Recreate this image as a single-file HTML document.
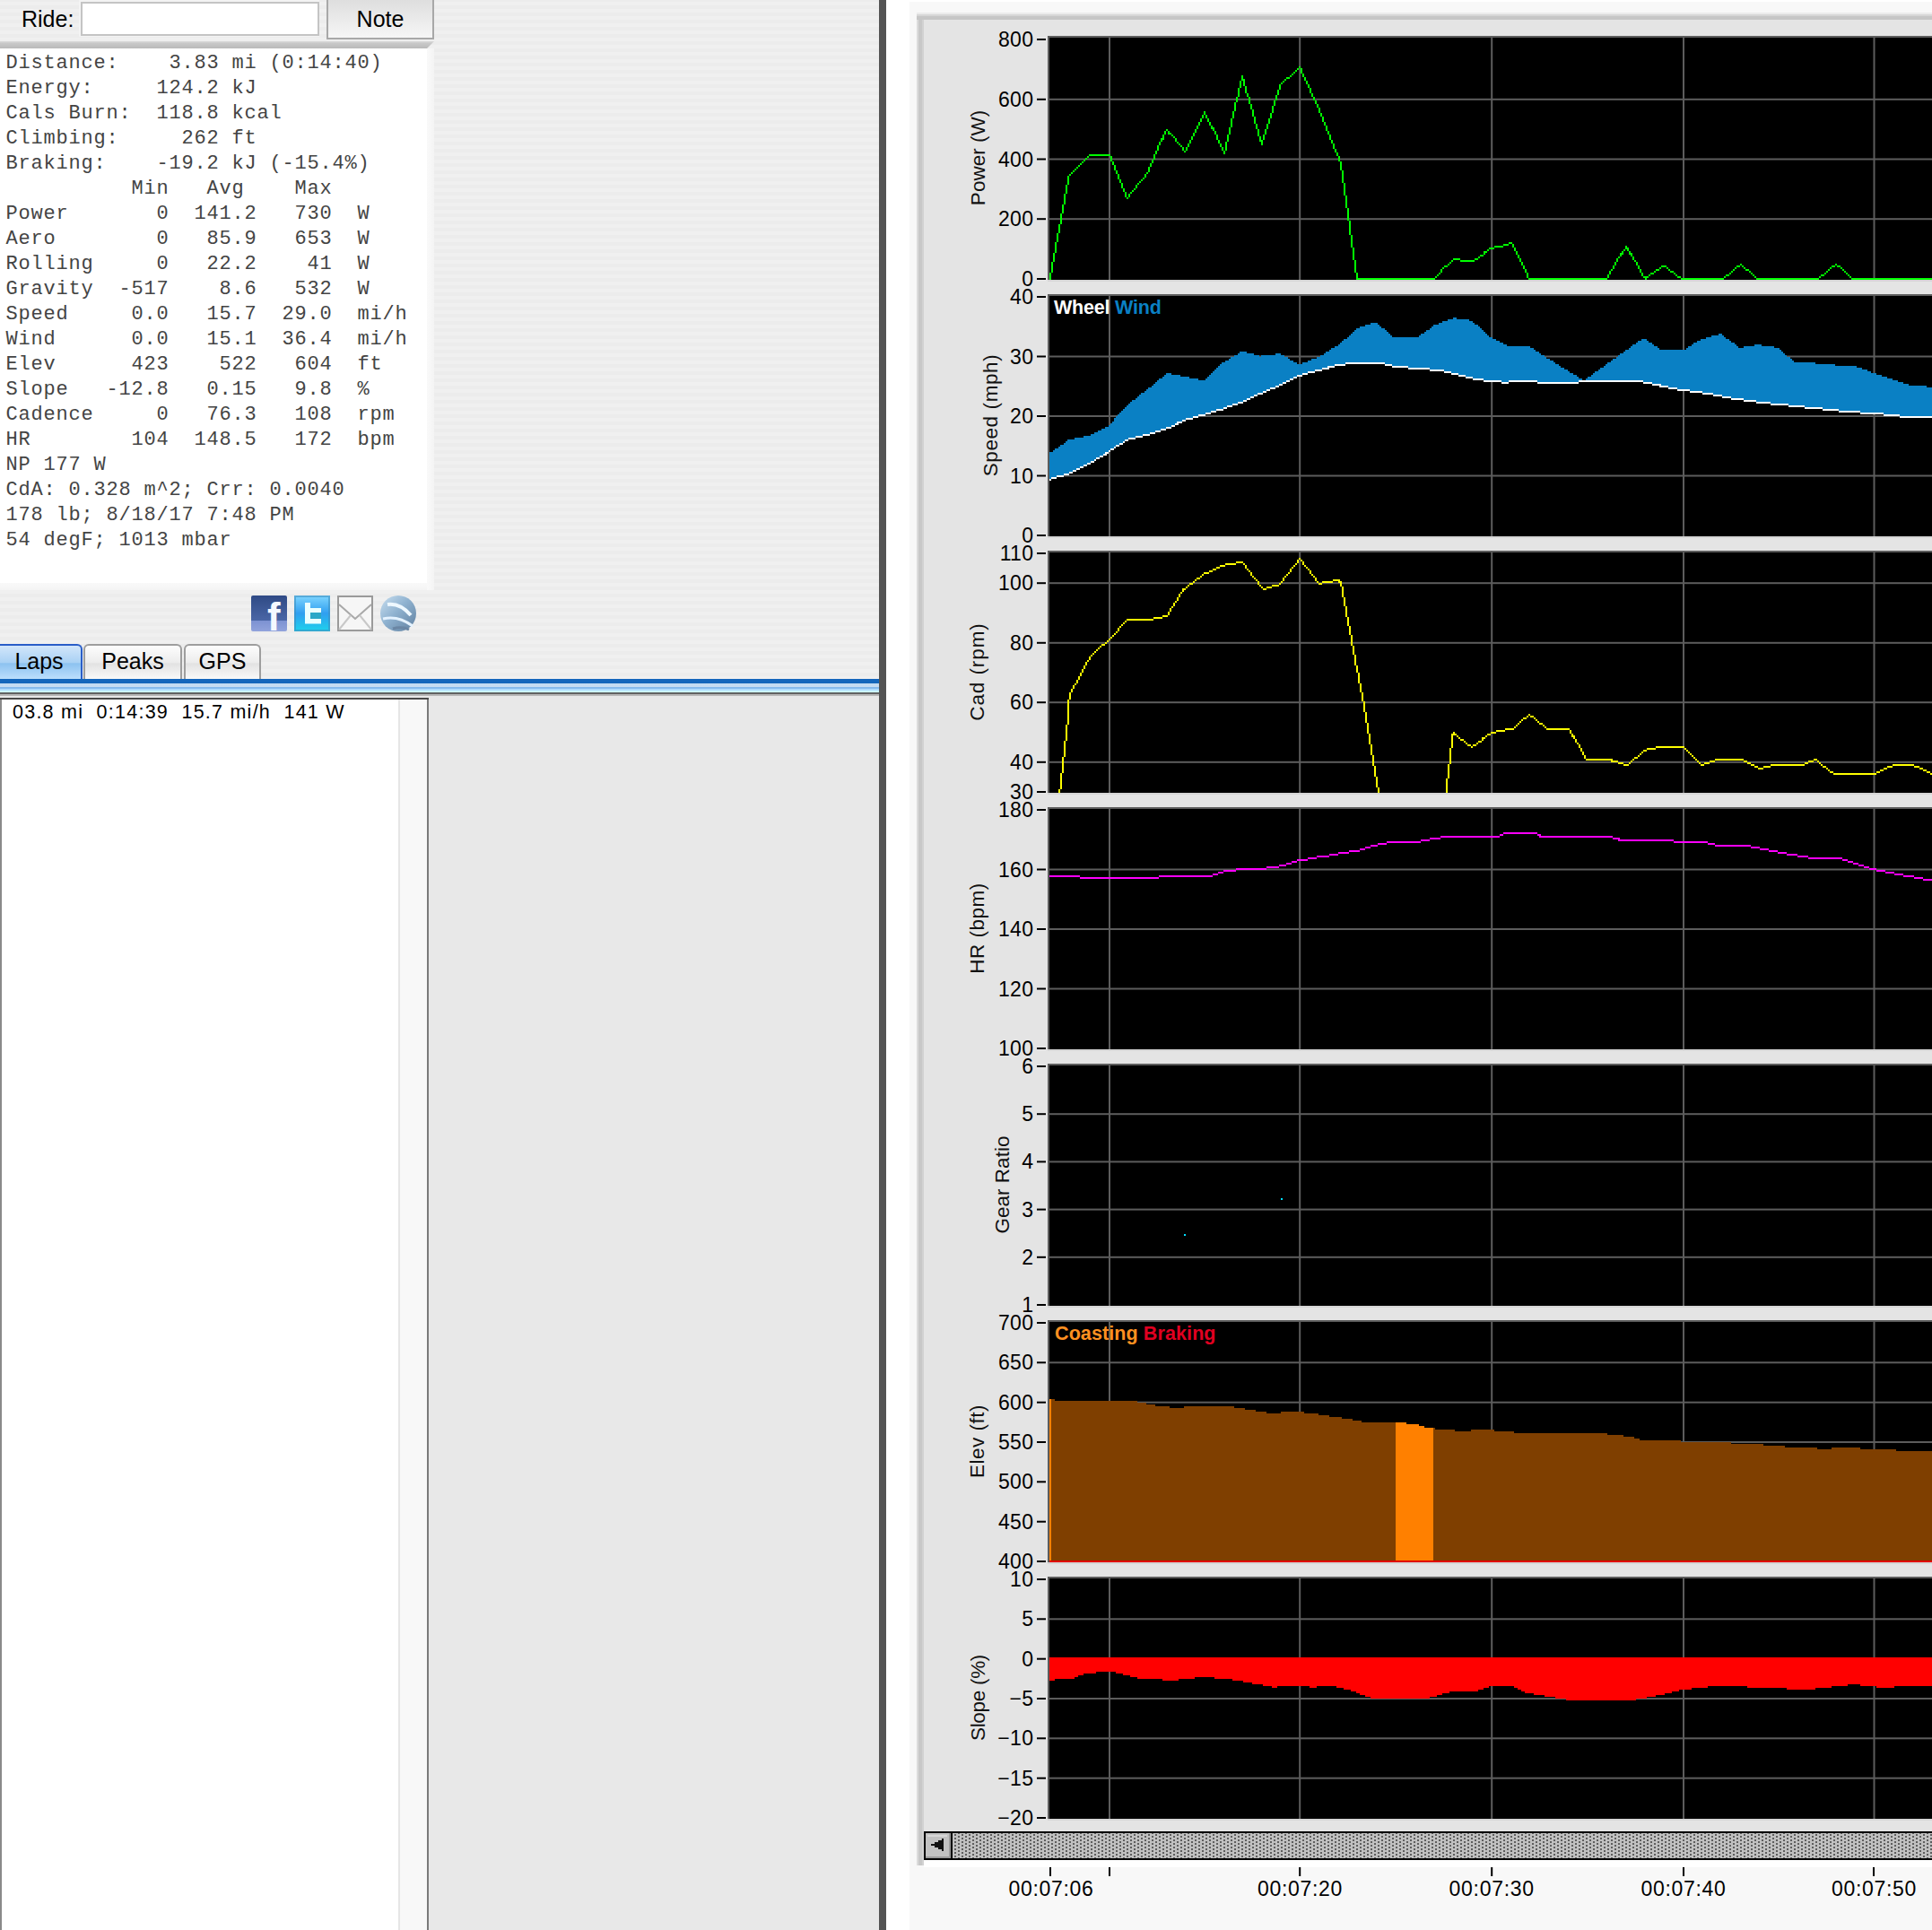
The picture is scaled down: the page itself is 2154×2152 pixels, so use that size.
<!DOCTYPE html>
<html><head><meta charset="utf-8">
<style>
html,body{margin:0;padding:0;width:2154px;height:2152px;overflow:hidden;background:#fff;}
body{position:relative;font-family:"Liberation Sans",sans-serif;}
.abs{position:absolute;}
.stripes{background:repeating-linear-gradient(to bottom,#ececec 0px,#ececec 2px,#f0f0f0 2px,#f0f0f0 6px,#ececec 6px,#ececec 8px);}
.mono{position:absolute;left:6.5px;top:57px;font-family:"Liberation Mono",monospace;font-size:22px;letter-spacing:0.8px;line-height:28px;white-space:pre;color:#444;}
.yt{position:absolute;left:952px;width:200.5px;text-align:right;font-size:23px;line-height:28px;color:#000;letter-spacing:0.4px;}
.yl{position:absolute;width:300px;text-align:center;font-size:22.5px;line-height:28px;color:#111;transform:rotate(-90deg);}
.xt{position:absolute;top:2092px;width:200px;text-align:center;font-size:23px;line-height:28px;color:#000;letter-spacing:0.7px;}
</style></head><body>
<!-- left panel background -->
<div class="abs stripes" style="left:0;top:0;width:980px;height:2152px"></div>
<!-- header -->
<div class="abs" style="left:88px;top:0;width:268px;height:41px;background:#f3f3f3"></div>
<div class="abs" style="left:90px;top:2px;width:262px;height:34px;background:#fff;border:2px solid #c4c4c4"></div>
<div class="abs" style="left:24px;top:4px;font-size:25px;line-height:34px;color:#000">Ride:</div>
<div class="abs" style="left:364px;top:-2px;width:116px;height:42px;border:2px solid #a8a8a8;background:linear-gradient(#dedede,#f6f6f6);"></div>
<div class="abs" style="left:364px;top:4px;width:120px;text-align:center;font-size:25px;line-height:34px;color:#000">Note</div>
<div class="abs" style="left:0;top:44px;width:484px;height:2px;background:#eeeeee"></div>
<div class="abs" style="left:0;top:46px;width:484px;height:8px;background:linear-gradient(#dadada,#c8c8c8 30%,#b9b9b9);clip-path:polygon(0 0,100% 0,100% 0,476px 100%,0 100%)"></div>
<!-- text box -->
<div class="abs" style="left:0;top:54px;width:476px;height:596px;background:#fff"></div>
<div class="abs" style="left:476px;top:54px;width:8px;height:604px;background:linear-gradient(to right,#f9f9f9,#f4f4f4)"></div>
<div class="abs" style="left:0;top:650px;width:476px;height:8px;background:linear-gradient(#f9f9f9,#f4f4f4)"></div>
<div class="mono">Distance:    3.83 mi (0:14:40)
Energy:     124.2 kJ
Cals Burn:  118.8 kcal
Climbing:     262 ft
Braking:    -19.2 kJ (-15.4%)
          Min   Avg    Max
Power       0  141.2   730  W
Aero        0   85.9   653  W
Rolling     0   22.2    41  W
Gravity  -517    8.6   532  W
Speed     0.0   15.7  29.0  mi/h
Wind      0.0   15.1  36.4  mi/h
Elev      423    522   604  ft
Slope   -12.8   0.15   9.8  %
Cadence     0   76.3   108  rpm
HR        104  148.5   172  bpm
NP 177 W
CdA: 0.328 m^2; Crr: 0.0040
178 lb; 8/18/17 7:48 PM
54 degF; 1013 mbar</div>
<!-- icons -->
<div class="abs" style="left:280px;top:664px;width:40px;height:40px;background:linear-gradient(#2f4a85 0%,#4a66a6 70%,#7d92d2 71%,#91a3dc 100%);border-radius:2px"></div>
<div class="abs" style="left:298px;top:664px;width:40px;height:44px;color:#f4f8ff;font-weight:bold;font-size:44px;line-height:48px;font-family:'Liberation Sans',sans-serif">f</div>
<svg class="abs" style="left:328px;top:664px" width="40" height="40"><defs><linearGradient id="tw" x1="0" y1="0" x2="0" y2="1"><stop offset="0" stop-color="#7fd6ff"/><stop offset="0.5" stop-color="#2f9ff0"/><stop offset="1" stop-color="#1ed2ec"/></linearGradient></defs><rect x="0" y="0" width="40" height="40" fill="url(#tw)"/><rect x="1" y="1" width="38" height="38" fill="none" stroke="#3d8fc0" stroke-width="2" opacity="0.6"/><rect x="18" y="19" width="12" height="7" fill="#2aa8c8"/><path d="M12,8 L18,8 L18,14 L30,14 L30,19 L18,19 L18,26 L30,26 L30,31.5 L12,31.5 Z" fill="#eaffff"/></svg>
<svg class="abs" style="left:376px;top:664px" width="40" height="40"><rect x="1" y="1" width="38" height="38" fill="#f6f6f6" stroke="#9a9a9a" stroke-width="2"/><path d="M2,10 L20,26 L38,10" fill="none" stroke="#a8a8a8" stroke-width="2"/><path d="M2,38 L15,22 M38,38 L25,22" stroke="#c8c8c8" stroke-width="2"/></svg>
<svg class="abs" style="left:424px;top:664px" width="40" height="40"><defs><linearGradient id="gl" x1="0" y1="0" x2="1" y2="1"><stop offset="0" stop-color="#c9dff0"/><stop offset="0.45" stop-color="#8fb2d0"/><stop offset="1" stop-color="#5f7f9f"/></linearGradient></defs><circle cx="20" cy="20" r="20" fill="url(#gl)"/><path d="M8,10 Q22,8 34,22" stroke="#eef8ff" stroke-width="4" fill="none"/><path d="M3,26 Q20,22 36,34" stroke="#e4f2ff" stroke-width="3" fill="none"/><path d="M14,37 Q24,34 32,38" stroke="#6a86a4" stroke-width="3" fill="none"/></svg>
<!-- tabs -->
<div class="abs" style="left:-4px;top:718px;width:92px;height:38px;border:2px solid #2a5ec8;border-bottom:none;border-radius:0 6px 0 0;background:linear-gradient(#d2e6fa,#a9d1f4 50%,#8cc2f0 52%,#bfe0fd)"></div>
<div class="abs" style="left:93px;top:718px;width:106px;height:38px;border:2px solid #9e9e9e;border-bottom:none;border-radius:6px 6px 0 0;background:linear-gradient(#fdfdfd,#ececec 50%,#e2e2e2 52%,#fafafa)"></div>
<div class="abs" style="left:205px;top:718px;width:82px;height:38px;border:2px solid #9e9e9e;border-bottom:none;border-radius:6px 6px 0 0;background:linear-gradient(#fdfdfd,#ececec 50%,#e2e2e2 52%,#fafafa)"></div>
<div class="abs" style="left:-2px;top:720px;width:91px;text-align:center;font-size:25px;line-height:34px;color:#000">Laps</div>
<div class="abs" style="left:93px;top:720px;width:110px;text-align:center;font-size:25px;line-height:34px;color:#000">Peaks</div>
<div class="abs" style="left:205px;top:720px;width:86px;text-align:center;font-size:25px;line-height:34px;color:#000">GPS</div>
<div class="abs" style="left:0;top:757px;width:980px;height:5px;background:#1466bc"></div>
<div class="abs" style="left:0;top:762px;width:980px;height:10px;background:linear-gradient(#c2daf1 0%,#c8ddf3 40%,#86baec 40%,#86baec 60%,#b0dcff 60%,#b0dcff 80%,#ccfeff 80%)"></div>
<div class="abs" style="left:0;top:772px;width:980px;height:2px;background:#626262"></div>
<div class="abs" style="left:0;top:774px;width:980px;height:2px;background:#b6b6b6"></div>
<div class="abs" style="left:0;top:776px;width:980px;height:1376px;background:#e8e8e8"></div>
<!-- list -->
<div class="abs" style="left:0;top:778px;width:478px;height:1374px;background:#4a4a4a"></div>
<div class="abs" style="left:2px;top:780px;width:474px;height:1372px;background:#fff"></div>
<div class="abs" style="left:476px;top:780px;width:2px;height:1372px;background:#7a7a7a"></div>
<div class="abs" style="left:0;top:780px;width:2px;height:1372px;background:#8a8a8a"></div>
<div class="abs" style="left:444px;top:780px;width:2px;height:1372px;background:#e6e6e6"></div>
<div class="abs" style="left:446px;top:780px;width:30px;height:1372px;background:#f8f8f8"></div>
<div class="abs" style="left:14px;top:780px;font-size:21.5px;line-height:28px;color:#000;white-space:pre;letter-spacing:1.24px">03.8 mi  0:14:39  15.7 mi/h  141 W</div>
<!-- divider -->
<div class="abs" style="left:980px;top:0;width:8px;height:2152px;background:#545454"></div>
<!-- right panel -->
<div class="abs" style="left:1014px;top:2px;width:1140px;height:2150px;background:#f8f8f8"></div>
<div class="abs" style="left:1022px;top:14px;width:1132px;height:2066px;background:linear-gradient(to right,#dcdcdc 0,#dcdcdc 2px,#c8c8c8 2px,#c8c8c8 6px,#d2d2d2 6px)"></div>
<div class="abs" style="left:1022px;top:14px;width:1132px;height:8px;background:linear-gradient(#ebebeb 0,#ebebeb 2px,#d6d6d6 2px,#d6d6d6 4.3px,#c6c6c6 4.3px)"></div>
<div class="abs" style="left:1030px;top:22px;width:1124px;height:2020px;background:#e4e4e4"></div>
<div class="abs" style="left:1030px;top:2074px;width:1124px;height:8px;background:#fff"></div>
<svg width="2154" height="2152" viewBox="0 0 2154 2152" style="position:absolute;left:0;top:0">
<defs>
<clipPath id="c0"><rect x="1170" y="42" width="984" height="270"/></clipPath>
<clipPath id="c1"><rect x="1170" y="330" width="984" height="268"/></clipPath>
<clipPath id="c2"><rect x="1170" y="616" width="984" height="268"/></clipPath>
<clipPath id="c3"><rect x="1170" y="902" width="984" height="268"/></clipPath>
<clipPath id="c4"><rect x="1170" y="1188" width="984" height="268"/></clipPath>
<clipPath id="c5"><rect x="1170" y="1474" width="984" height="268"/></clipPath>
<clipPath id="c6"><rect x="1170" y="1760" width="984" height="268"/></clipPath>
<pattern id="dots" x="1064" y="2045" width="8" height="4" patternUnits="userSpaceOnUse"><rect width="8" height="4" fill="#c0c0c0"/><rect x="0" y="0" width="2" height="2" fill="#5e5e5e"/><rect x="4" y="2" width="2" height="2" fill="#5e5e5e"/></pattern>
</defs>
<rect x="1168" y="40" width="986" height="272" fill="#000"/>
<rect x="1168" y="40" width="986" height="2" fill="#5c5c5c"/>
<rect x="1168" y="40" width="2" height="272" fill="#5c5c5c"/>
<rect x="1168" y="312" width="986" height="2" fill="#d6d6d6"/>
<rect x="1156" y="43.0" width="10" height="2" fill="#000"/>
<rect x="1156" y="109.8" width="10" height="2" fill="#000"/>
<rect x="1170" y="109.8" width="984" height="2" fill="#5c5c5c"/>
<rect x="1156" y="176.5" width="10" height="2" fill="#000"/>
<rect x="1170" y="176.5" width="984" height="2" fill="#5c5c5c"/>
<rect x="1156" y="243.2" width="10" height="2" fill="#000"/>
<rect x="1170" y="243.2" width="984" height="2" fill="#5c5c5c"/>
<rect x="1156" y="310.0" width="10" height="2" fill="#000"/>
<rect x="1236.0" y="40" width="2" height="272" fill="#5c5c5c"/>
<rect x="1448.2" y="40" width="2" height="272" fill="#5c5c5c"/>
<rect x="1662.2" y="40" width="2" height="272" fill="#5c5c5c"/>
<rect x="1876.0" y="40" width="2" height="272" fill="#5c5c5c"/>
<rect x="2088.5" y="40" width="2" height="272" fill="#5c5c5c"/>
<rect x="1168" y="328" width="986" height="270" fill="#000"/>
<rect x="1168" y="328" width="986" height="2" fill="#5c5c5c"/>
<rect x="1168" y="328" width="2" height="270" fill="#5c5c5c"/>
<rect x="1168" y="598" width="986" height="2" fill="#d6d6d6"/>
<rect x="1156" y="330.0" width="10" height="2" fill="#000"/>
<rect x="1156" y="396.5" width="10" height="2" fill="#000"/>
<rect x="1170" y="396.5" width="984" height="2" fill="#5c5c5c"/>
<rect x="1156" y="463.0" width="10" height="2" fill="#000"/>
<rect x="1170" y="463.0" width="984" height="2" fill="#5c5c5c"/>
<rect x="1156" y="529.5" width="10" height="2" fill="#000"/>
<rect x="1170" y="529.5" width="984" height="2" fill="#5c5c5c"/>
<rect x="1156" y="596.0" width="10" height="2" fill="#000"/>
<rect x="1236.0" y="328" width="2" height="270" fill="#5c5c5c"/>
<rect x="1448.2" y="328" width="2" height="270" fill="#5c5c5c"/>
<rect x="1662.2" y="328" width="2" height="270" fill="#5c5c5c"/>
<rect x="1876.0" y="328" width="2" height="270" fill="#5c5c5c"/>
<rect x="2088.5" y="328" width="2" height="270" fill="#5c5c5c"/>
<rect x="1168" y="614" width="986" height="270" fill="#000"/>
<rect x="1168" y="614" width="986" height="2" fill="#5c5c5c"/>
<rect x="1168" y="614" width="2" height="270" fill="#5c5c5c"/>
<rect x="1168" y="884" width="986" height="2" fill="#d6d6d6"/>
<rect x="1156" y="616.0" width="10" height="2" fill="#000"/>
<rect x="1156" y="649.2" width="10" height="2" fill="#000"/>
<rect x="1170" y="649.2" width="984" height="2" fill="#5c5c5c"/>
<rect x="1156" y="715.8" width="10" height="2" fill="#000"/>
<rect x="1170" y="715.8" width="984" height="2" fill="#5c5c5c"/>
<rect x="1156" y="782.2" width="10" height="2" fill="#000"/>
<rect x="1170" y="782.2" width="984" height="2" fill="#5c5c5c"/>
<rect x="1156" y="848.8" width="10" height="2" fill="#000"/>
<rect x="1170" y="848.8" width="984" height="2" fill="#5c5c5c"/>
<rect x="1156" y="882.0" width="10" height="2" fill="#000"/>
<rect x="1236.0" y="614" width="2" height="270" fill="#5c5c5c"/>
<rect x="1448.2" y="614" width="2" height="270" fill="#5c5c5c"/>
<rect x="1662.2" y="614" width="2" height="270" fill="#5c5c5c"/>
<rect x="1876.0" y="614" width="2" height="270" fill="#5c5c5c"/>
<rect x="2088.5" y="614" width="2" height="270" fill="#5c5c5c"/>
<rect x="1168" y="900" width="986" height="270" fill="#000"/>
<rect x="1168" y="900" width="986" height="2" fill="#5c5c5c"/>
<rect x="1168" y="900" width="2" height="270" fill="#5c5c5c"/>
<rect x="1168" y="1170" width="986" height="2" fill="#d6d6d6"/>
<rect x="1156" y="902.0" width="10" height="2" fill="#000"/>
<rect x="1156" y="968.5" width="10" height="2" fill="#000"/>
<rect x="1170" y="968.5" width="984" height="2" fill="#5c5c5c"/>
<rect x="1156" y="1035.0" width="10" height="2" fill="#000"/>
<rect x="1170" y="1035.0" width="984" height="2" fill="#5c5c5c"/>
<rect x="1156" y="1101.5" width="10" height="2" fill="#000"/>
<rect x="1170" y="1101.5" width="984" height="2" fill="#5c5c5c"/>
<rect x="1156" y="1168.0" width="10" height="2" fill="#000"/>
<rect x="1236.0" y="900" width="2" height="270" fill="#5c5c5c"/>
<rect x="1448.2" y="900" width="2" height="270" fill="#5c5c5c"/>
<rect x="1662.2" y="900" width="2" height="270" fill="#5c5c5c"/>
<rect x="1876.0" y="900" width="2" height="270" fill="#5c5c5c"/>
<rect x="2088.5" y="900" width="2" height="270" fill="#5c5c5c"/>
<rect x="1168" y="1186" width="986" height="270" fill="#000"/>
<rect x="1168" y="1186" width="986" height="2" fill="#5c5c5c"/>
<rect x="1168" y="1186" width="2" height="270" fill="#5c5c5c"/>
<rect x="1168" y="1456" width="986" height="2" fill="#d6d6d6"/>
<rect x="1156" y="1188.0" width="10" height="2" fill="#000"/>
<rect x="1156" y="1241.2" width="10" height="2" fill="#000"/>
<rect x="1170" y="1241.2" width="984" height="2" fill="#5c5c5c"/>
<rect x="1156" y="1294.4" width="10" height="2" fill="#000"/>
<rect x="1170" y="1294.4" width="984" height="2" fill="#5c5c5c"/>
<rect x="1156" y="1347.6" width="10" height="2" fill="#000"/>
<rect x="1170" y="1347.6" width="984" height="2" fill="#5c5c5c"/>
<rect x="1156" y="1400.8" width="10" height="2" fill="#000"/>
<rect x="1170" y="1400.8" width="984" height="2" fill="#5c5c5c"/>
<rect x="1156" y="1454.0" width="10" height="2" fill="#000"/>
<rect x="1236.0" y="1186" width="2" height="270" fill="#5c5c5c"/>
<rect x="1448.2" y="1186" width="2" height="270" fill="#5c5c5c"/>
<rect x="1662.2" y="1186" width="2" height="270" fill="#5c5c5c"/>
<rect x="1876.0" y="1186" width="2" height="270" fill="#5c5c5c"/>
<rect x="2088.5" y="1186" width="2" height="270" fill="#5c5c5c"/>
<rect x="1168" y="1472" width="986" height="270" fill="#000"/>
<rect x="1168" y="1472" width="986" height="2" fill="#5c5c5c"/>
<rect x="1168" y="1472" width="2" height="270" fill="#5c5c5c"/>
<rect x="1168" y="1742" width="986" height="2" fill="#d6d6d6"/>
<rect x="1156" y="1474.0" width="10" height="2" fill="#000"/>
<rect x="1156" y="1518.3" width="10" height="2" fill="#000"/>
<rect x="1170" y="1518.3" width="984" height="2" fill="#5c5c5c"/>
<rect x="1156" y="1562.7" width="10" height="2" fill="#000"/>
<rect x="1170" y="1562.7" width="984" height="2" fill="#5c5c5c"/>
<rect x="1156" y="1607.0" width="10" height="2" fill="#000"/>
<rect x="1170" y="1607.0" width="984" height="2" fill="#5c5c5c"/>
<rect x="1156" y="1651.3" width="10" height="2" fill="#000"/>
<rect x="1170" y="1651.3" width="984" height="2" fill="#5c5c5c"/>
<rect x="1156" y="1695.7" width="10" height="2" fill="#000"/>
<rect x="1170" y="1695.7" width="984" height="2" fill="#5c5c5c"/>
<rect x="1156" y="1740.0" width="10" height="2" fill="#000"/>
<rect x="1236.0" y="1472" width="2" height="270" fill="#5c5c5c"/>
<rect x="1448.2" y="1472" width="2" height="270" fill="#5c5c5c"/>
<rect x="1662.2" y="1472" width="2" height="270" fill="#5c5c5c"/>
<rect x="1876.0" y="1472" width="2" height="270" fill="#5c5c5c"/>
<rect x="2088.5" y="1472" width="2" height="270" fill="#5c5c5c"/>
<rect x="1168" y="1758" width="986" height="270" fill="#000"/>
<rect x="1168" y="1758" width="986" height="2" fill="#5c5c5c"/>
<rect x="1168" y="1758" width="2" height="270" fill="#5c5c5c"/>
<rect x="1168" y="2028" width="986" height="2" fill="#d6d6d6"/>
<rect x="1156" y="1760.0" width="10" height="2" fill="#000"/>
<rect x="1156" y="1804.3" width="10" height="2" fill="#000"/>
<rect x="1170" y="1804.3" width="984" height="2" fill="#5c5c5c"/>
<rect x="1156" y="1848.7" width="10" height="2" fill="#000"/>
<rect x="1170" y="1848.7" width="984" height="2" fill="#5c5c5c"/>
<rect x="1156" y="1893.0" width="10" height="2" fill="#000"/>
<rect x="1170" y="1893.0" width="984" height="2" fill="#5c5c5c"/>
<rect x="1156" y="1937.3" width="10" height="2" fill="#000"/>
<rect x="1170" y="1937.3" width="984" height="2" fill="#5c5c5c"/>
<rect x="1156" y="1981.7" width="10" height="2" fill="#000"/>
<rect x="1170" y="1981.7" width="984" height="2" fill="#5c5c5c"/>
<rect x="1156" y="2026.0" width="10" height="2" fill="#000"/>
<rect x="1236.0" y="1758" width="2" height="270" fill="#5c5c5c"/>
<rect x="1448.2" y="1758" width="2" height="270" fill="#5c5c5c"/>
<rect x="1662.2" y="1758" width="2" height="270" fill="#5c5c5c"/>
<rect x="1876.0" y="1758" width="2" height="270" fill="#5c5c5c"/>
<rect x="2088.5" y="1758" width="2" height="270" fill="#5c5c5c"/>
<path d="M1170,304h2v8h-2zM1172,292h2v12h-2zM1174,282h2v10h-2zM1176,270h2v12h-2zM1178,260h2v10h-2zM1180,250h2v10h-2zM1182,238h2v12h-2zM1184,228h2v10h-2zM1186,216h2v12h-2zM1188,206h2v10h-2zM1190,196h2v10h-2zM1192,194h2v2h-2zM1194,192h2v2h-2zM1196,190h2v2h-2zM1198,188h2v2h-2zM1200,186h2v2h-2zM1202,184h2v2h-2zM1204,182h2v2h-2zM1206,180h2v2h-2zM1208,178h2v2h-2zM1210,176h2v2h-2zM1212,174h2v2h-2zM1214,172h24v2h-24zM1238,174h2v6h-2zM1240,180h2v4h-2zM1242,184h2v6h-2zM1244,190h2v4h-2zM1246,194h2v6h-2zM1248,200h2v4h-2zM1250,204h2v6h-2zM1252,210h2v4h-2zM1254,214h2v6h-2zM1256,220h2v2h-2zM1258,216h2v4h-2zM1260,214h2v2h-2zM1262,212h2v2h-2zM1264,210h2v2h-2zM1266,206h2v4h-2zM1268,204h2v2h-2zM1270,202h2v2h-2zM1272,200h2v2h-2zM1274,198h2v2h-2zM1276,194h2v4h-2zM1278,192h2v2h-2zM1280,186h2v6h-2zM1282,182h2v4h-2zM1284,178h2v4h-2zM1286,172h2v6h-2zM1288,168h2v4h-2zM1290,162h2v6h-2zM1292,158h2v4h-2zM1294,156h2v2h-2zM1294,154h4v2h-4zM1296,150h2v4h-2zM1298,146h2v4h-2zM1300,144h2v2h-2zM1302,146h2v2h-2zM1302,148h4v2h-4zM1306,150h2v2h-2zM1308,152h2v2h-2zM1310,154h2v4h-2zM1312,158h2v2h-2zM1314,160h2v2h-2zM1316,162h2v2h-2zM1318,164h2v4h-2zM1320,168h2v2h-2zM1322,164h2v4h-2zM1324,160h2v4h-2zM1326,156h2v4h-2zM1328,152h2v4h-2zM1330,148h2v4h-2zM1332,144h2v4h-2zM1334,140h2v4h-2zM1336,136h2v4h-2zM1338,132h2v4h-2zM1340,128h2v4h-2zM1342,124h2v4h-2zM1344,128h2v4h-2zM1346,132h2v4h-2zM1348,136h2v4h-2zM1350,140h2v2h-2zM1350,142h4v2h-4zM1352,144h2v2h-2zM1354,146h2v4h-2zM1356,150h2v6h-2zM1358,156h2v4h-2zM1360,160h2v4h-2zM1362,164h2v4h-2zM1364,168h2v4h-2zM1366,158h2v10h-2zM1368,150h2v8h-2zM1370,142h2v8h-2zM1372,132h2v10h-2zM1374,124h2v8h-2zM1376,114h2v10h-2zM1378,108h2v6h-2zM1380,98h2v10h-2zM1382,90h2v8h-2zM1384,84h2v4h-2zM1384,88h4v2h-4zM1386,90h2v6h-2zM1388,96h2v8h-2zM1390,104h2v4h-2zM1392,108h2v8h-2zM1394,116h2v6h-2zM1396,122h2v8h-2zM1398,130h2v8h-2zM1400,138h2v6h-2zM1402,144h2v8h-2zM1404,152h2v4h-2zM1404,156h4v2h-4zM1406,158h2v4h-2zM1408,150h2v6h-2zM1410,144h2v6h-2zM1412,138h2v6h-2zM1414,132h2v6h-2zM1416,126h2v6h-2zM1418,118h2v8h-2zM1420,112h2v6h-2zM1422,106h2v6h-2zM1424,100h2v6h-2zM1426,94h2v6h-2zM1428,92h2v2h-2zM1430,90h2v2h-2zM1432,88h2v2h-2zM1434,86h4v2h-4zM1438,84h2v2h-2zM1440,82h2v2h-2zM1442,80h2v2h-2zM1444,78h2v2h-2zM1446,76h2v2h-2zM1448,74h2v2h-2zM1450,76h2v6h-2zM1452,82h2v4h-2zM1454,86h2v4h-2zM1456,90h2v4h-2zM1458,94h2v4h-2zM1460,98h2v6h-2zM1462,104h2v4h-2zM1464,108h2v4h-2zM1466,112h2v4h-2zM1468,116h2v4h-2zM1470,120h2v6h-2zM1472,126h2v4h-2zM1474,130h2v6h-2zM1476,136h2v4h-2zM1478,140h2v6h-2zM1480,146h2v4h-2zM1482,150h2v6h-2zM1484,156h2v4h-2zM1486,160h2v6h-2zM1488,166h2v4h-2zM1490,170h2v4h-2zM1492,174h2v6h-2zM1494,180h2v10h-2zM1496,190h2v14h-2zM1498,204h2v14h-2zM1500,218h2v14h-2zM1502,232h2v14h-2zM1504,246h2v16h-2zM1506,262h2v14h-2zM1508,276h2v14h-2zM1510,290h2v14h-2zM1512,304h2v6h-2zM1512,310h88v2h-88zM1600,308h2v2h-2zM1602,306h2v2h-2zM1604,304h2v2h-2zM1606,300h2v4h-2zM1608,298h2v2h-2zM1610,296h4v2h-4zM1614,294h2v2h-2zM1616,292h2v2h-2zM1618,290h2v2h-2zM1620,288h8v2h-8zM1628,290h16v2h-16zM1644,288h4v2h-4zM1648,286h2v2h-2zM1650,284h4v2h-4zM1654,282h2v2h-2zM1654,280h4v2h-4zM1658,278h2v2h-2zM1660,276h6v2h-6zM1666,274h10v2h-10zM1676,272h6v2h-6zM1682,270h4v2h-4zM1686,272h2v4h-2zM1688,276h2v4h-2zM1690,280h2v4h-2zM1692,284h2v4h-2zM1694,288h2v4h-2zM1696,292h2v4h-2zM1698,296h2v4h-2zM1700,300h2v4h-2zM1702,304h2v6h-2zM1704,310h88v2h-88zM1792,306h2v4h-2zM1794,302h2v4h-2zM1796,300h2v2h-2zM1798,296h2v4h-2zM1800,292h2v4h-2zM1802,288h2v4h-2zM1804,286h2v2h-2zM1806,284h2v2h-2zM1806,282h4v2h-4zM1808,280h2v2h-2zM1810,278h2v2h-2zM1812,274h2v2h-2zM1812,276h4v2h-4zM1814,278h2v2h-2zM1816,280h2v2h-2zM1816,282h4v2h-4zM1818,284h2v2h-2zM1820,286h2v4h-2zM1822,290h2v2h-2zM1824,292h2v4h-2zM1826,296h2v4h-2zM1828,300h2v4h-2zM1830,304h2v4h-2zM1832,308h6v2h-6zM1834,310h2v2h-2zM1838,306h2v2h-2zM1840,304h4v2h-4zM1844,302h2v2h-2zM1846,300h4v2h-4zM1850,298h2v2h-2zM1852,296h6v2h-6zM1858,298h2v2h-2zM1860,300h2v2h-2zM1862,302h4v2h-4zM1866,304h2v2h-2zM1868,306h2v2h-2zM1870,308h4v2h-4zM1874,310h48v2h-48zM1922,308h2v2h-2zM1924,306h4v2h-4zM1928,304h2v2h-2zM1930,302h2v2h-2zM1932,300h2v2h-2zM1934,298h2v2h-2zM1936,296h4v2h-4zM1940,294h2v2h-2zM1942,296h2v2h-2zM1944,298h2v2h-2zM1946,300h4v2h-4zM1950,302h2v2h-2zM1952,304h2v2h-2zM1954,306h2v2h-2zM1956,308h2v2h-2zM1958,310h70v2h-70zM2028,308h2v2h-2zM2030,306h4v2h-4zM2034,304h2v2h-2zM2036,302h2v2h-2zM2038,300h2v2h-2zM2040,298h2v2h-2zM2042,296h4v2h-4zM2046,294h2v2h-2zM2048,296h4v2h-4zM2052,298h2v2h-2zM2054,300h2v2h-2zM2056,302h2v2h-2zM2058,304h2v2h-2zM2060,306h2v2h-2zM2062,308h2v2h-2zM2064,310h90v2h-90z" fill="#00ff00"/>
<path d="M1170,504h4v30h-4zM1174,502h2v32h-2zM1176,500h4v32h-4zM1180,498h2v34h-2zM1182,496h4v34h-4zM1186,494h2v36h-2zM1188,492h2v36h-2zM1190,490h4v38h-4zM1194,490h4v36h-4zM1198,488h4v36h-4zM1202,488h4v34h-4zM1206,488h2v32h-2zM1208,486h2v34h-2zM1210,486h4v32h-4zM1214,486h2v30h-2zM1216,484h2v32h-2zM1218,484h2v30h-2zM1220,482h2v32h-2zM1222,482h2v30h-2zM1224,480h4v30h-4zM1228,478h2v30h-2zM1230,478h2v28h-2zM1232,476h2v30h-2zM1234,476h2v28h-2zM1236,474h2v30h-2zM1238,472h2v30h-2zM1240,470h2v30h-2zM1242,466h2v34h-2zM1244,464h2v34h-2zM1246,462h2v36h-2zM1248,460h2v36h-2zM1250,458h2v36h-2zM1252,456h2v38h-2zM1254,454h2v38h-2zM1256,452h2v38h-2zM1258,450h2v40h-2zM1260,448h2v42h-2zM1262,446h4v42h-4zM1266,444h2v44h-2zM1268,442h2v46h-2zM1270,440h2v46h-2zM1272,438h4v48h-4zM1276,436h2v50h-2zM1278,434h2v50h-2zM1280,432h4v52h-4zM1284,430h2v52h-2zM1286,428h2v54h-2zM1288,426h2v56h-2zM1290,424h2v56h-2zM1292,422h4v58h-4zM1296,420h2v58h-2zM1298,418h2v60h-2zM1300,416h2v62h-2zM1302,416h4v60h-4zM1306,418h6v56h-6zM1312,418h4v54h-4zM1316,420h4v50h-4zM1320,420h6v48h-6zM1326,422h6v44h-6zM1332,422h4v42h-4zM1336,424h4v40h-4zM1340,424h4v38h-4zM1344,422h2v40h-2zM1346,420h2v40h-2zM1348,418h2v42h-2zM1350,416h2v44h-2zM1352,414h2v46h-2zM1354,412h2v46h-2zM1356,410h2v48h-2zM1358,408h2v50h-2zM1360,406h2v50h-2zM1362,404h4v52h-4zM1366,402h4v52h-4zM1370,400h2v54h-2zM1372,398h4v54h-4zM1376,396h2v56h-2zM1378,396h2v54h-2zM1380,394h2v56h-2zM1382,392h6v56h-6zM1388,392h2v54h-2zM1390,394h2v52h-2zM1392,394h4v50h-4zM1396,394h2v48h-2zM1398,396h2v46h-2zM1400,396h4v44h-4zM1404,398h2v40h-2zM1406,396h4v42h-4zM1410,396h4v40h-4zM1414,396h4v38h-4zM1418,396h4v36h-4zM1422,394h2v38h-2zM1424,394h4v36h-4zM1428,396h4v32h-4zM1432,398h4v28h-4zM1436,400h2v24h-2zM1438,402h2v22h-2zM1440,402h2v20h-2zM1442,404h2v18h-2zM1444,404h2v16h-2zM1446,406h2v14h-2zM1448,406h4v12h-4zM1452,404h2v14h-2zM1454,404h4v12h-4zM1458,402h4v14h-4zM1462,400h6v14h-6zM1468,398h4v14h-4zM1472,396h4v16h-4zM1476,394h2v16h-2zM1478,392h4v18h-4zM1482,390h2v20h-2zM1484,388h4v20h-4zM1488,386h4v22h-4zM1492,384h2v24h-2zM1494,382h2v24h-2zM1496,380h2v26h-2zM1498,378h4v28h-4zM1502,376h2v30h-2zM1504,374h2v32h-2zM1506,372h2v34h-2zM1508,370h2v34h-2zM1510,368h2v36h-2zM1512,366h4v38h-4zM1516,364h6v40h-6zM1522,362h6v42h-6zM1528,360h8v44h-8zM1536,362h2v42h-2zM1538,364h2v42h-2zM1540,366h4v40h-4zM1544,368h2v38h-2zM1546,370h2v38h-2zM1548,372h2v36h-2zM1550,374h2v34h-2zM1552,376h4v32h-4zM1556,376h24v34h-24zM1580,376h2v36h-2zM1582,374h2v38h-2zM1584,372h4v40h-4zM1588,370h2v42h-2zM1590,368h4v44h-4zM1594,366h2v46h-2zM1596,364h2v48h-2zM1598,362h6v50h-6zM1604,360h2v52h-2zM1606,360h2v54h-2zM1608,358h6v56h-6zM1614,356h6v60h-6zM1620,354h2v62h-2zM1622,354h2v64h-2zM1624,356h6v62h-6zM1630,356h8v64h-8zM1638,358h4v64h-4zM1642,360h2v62h-2zM1644,362h4v60h-4zM1648,364h2v60h-2zM1650,366h2v58h-2zM1652,368h2v56h-2zM1654,370h2v54h-2zM1656,372h2v52h-2zM1658,374h2v50h-2zM1660,376h4v48h-4zM1664,378h4v48h-4zM1668,380h4v46h-4zM1672,382h4v44h-4zM1676,384h4v42h-4zM1680,386h12v40h-12zM1692,386h12v38h-12zM1704,386h2v40h-2zM1706,388h4v38h-4zM1710,390h2v36h-2zM1712,392h4v34h-4zM1716,394h2v32h-2zM1718,396h4v30h-4zM1722,398h2v28h-2zM1724,400h4v26h-4zM1728,402h4v24h-4zM1732,404h2v22h-2zM1734,406h4v20h-4zM1738,408h2v18h-2zM1740,410h4v16h-4zM1744,412h4v14h-4zM1748,414h2v12h-2zM1750,416h4v10h-4zM1754,418h4v8h-4zM1758,420h2v6h-2zM1760,422h2v4h-2zM1762,422h2v2h-2zM1768,422h2v2h-2zM1770,420h4v4h-4zM1774,418h2v6h-2zM1776,416h2v8h-2zM1778,414h4v10h-4zM1782,412h2v12h-2zM1784,410h4v14h-4zM1788,408h2v16h-2zM1790,406h2v18h-2zM1792,404h4v20h-4zM1796,402h2v22h-2zM1798,400h4v24h-4zM1802,398h2v26h-2zM1804,396h2v28h-2zM1806,394h4v30h-4zM1810,392h2v32h-2zM1812,390h4v34h-4zM1816,388h2v36h-2zM1818,386h2v38h-2zM1820,384h4v40h-4zM1824,382h2v42h-2zM1826,380h4v46h-4zM1830,378h6v48h-6zM1836,380h2v48h-2zM1838,382h4v46h-4zM1842,384h2v44h-2zM1844,386h2v42h-2zM1846,386h2v44h-2zM1848,388h2v42h-2zM1850,390h6v40h-6zM1856,390h10v42h-10zM1866,390h10v44h-10zM1876,390h4v46h-4zM1880,388h2v48h-2zM1882,386h4v50h-4zM1886,384h2v52h-2zM1888,382h4v54h-4zM1892,380h4v58h-4zM1896,378h6v60h-6zM1902,376h2v62h-2zM1904,376h4v64h-4zM1908,374h6v66h-6zM1914,374h2v68h-2zM1916,372h4v70h-4zM1920,374h2v68h-2zM1922,376h2v66h-2zM1924,378h2v64h-2zM1926,378h2v66h-2zM1928,380h2v64h-2zM1930,382h4v62h-4zM1934,384h2v60h-2zM1936,386h2v60h-2zM1938,388h6v58h-6zM1944,386h6v60h-6zM1950,386h6v62h-6zM1956,384h8v64h-8zM1964,386h2v62h-2zM1966,386h12v64h-12zM1978,388h4v62h-4zM1982,388h2v64h-2zM1984,390h2v62h-2zM1986,392h2v60h-2zM1988,394h2v58h-2zM1990,396h2v56h-2zM1992,398h4v54h-4zM1996,400h2v52h-2zM1998,402h2v50h-2zM2000,404h2v48h-2zM2002,404h20v50h-20zM2022,404h2v52h-2zM2024,406h18v50h-18zM2042,406h4v52h-4zM2046,408h16v50h-16zM2062,408h8v52h-8zM2070,410h6v50h-6zM2076,412h6v48h-6zM2082,414h4v46h-4zM2086,416h6v46h-6zM2092,418h6v44h-6zM2098,420h6v42h-6zM2104,422h4v40h-4zM2108,422h2v42h-2zM2110,424h6v40h-6zM2116,426h6v38h-6zM2122,428h6v36h-6zM2128,430h20v34h-20zM2148,432h6v32h-6z" fill="#0a80c4"/>
<path d="M1170,534h2v2h-2zM1172,532h6v2h-6zM1178,530h8v2h-8zM1186,528h6v2h-6zM1192,526h4v2h-4zM1196,524h4v2h-4zM1200,522h4v2h-4zM1204,520h4v2h-4zM1208,518h4v2h-4zM1212,516h4v2h-4zM1216,514h4v2h-4zM1220,512h2v2h-2zM1222,510h4v2h-4zM1226,508h4v2h-4zM1230,506h4v2h-4zM1232,504h4v2h-4zM1236,502h2v2h-2zM1238,500h4v2h-4zM1242,498h2v2h-2zM1244,496h4v2h-4zM1248,494h4v2h-4zM1252,492h2v2h-2zM1254,490h4v2h-4zM1258,488h8v2h-8zM1266,486h8v2h-8zM1274,484h8v2h-8zM1282,482h6v2h-6zM1288,480h6v2h-6zM1294,478h6v2h-6zM1300,476h6v2h-6zM1306,474h4v2h-4zM1310,472h4v2h-4zM1312,470h6v2h-6zM1318,468h4v2h-4zM1322,466h8v2h-8zM1330,464h6v2h-6zM1336,462h8v2h-8zM1344,460h6v2h-6zM1350,458h6v2h-6zM1356,456h8v2h-8zM1364,454h4v2h-4zM1368,452h6v2h-6zM1374,450h6v2h-6zM1380,448h6v2h-6zM1386,446h4v2h-4zM1390,444h4v2h-4zM1394,442h4v2h-4zM1398,440h4v2h-4zM1402,438h6v2h-6zM1408,436h4v2h-4zM1412,434h4v2h-4zM1416,432h6v2h-6zM1422,430h4v2h-4zM1426,428h4v2h-4zM1430,426h4v2h-4zM1434,424h4v2h-4zM1438,422h4v2h-4zM1442,420h4v2h-4zM1446,418h6v2h-6zM1452,416h6v2h-6zM1458,414h8v2h-8zM1466,412h8v2h-8zM1474,410h8v2h-8zM1480,408h8v2h-8zM1488,406h12v2h-12zM1500,404h44v2h-44zM1544,406h8v2h-8zM1552,408h18v2h-18zM1570,410h24v2h-24zM1594,412h16v2h-16zM1610,414h8v2h-8zM1618,416h8v2h-8zM1626,418h8v2h-8zM1634,420h8v2h-8zM1642,422h12v2h-12zM1654,424h20v2h-20zM1674,426h8v2h-8zM1682,424h32v2h-32zM1714,426h46v2h-46zM1760,424h72v2h-72zM1832,426h10v2h-10zM1842,428h10v2h-10zM1850,430h10v2h-10zM1860,432h10v2h-10zM1870,434h14v2h-14zM1884,436h14v2h-14zM1898,438h12v2h-12zM1910,440h10v2h-10zM1920,442h10v2h-10zM1930,444h14v2h-14zM1944,446h14v2h-14zM1958,448h16v2h-16zM1974,450h20v2h-20zM1994,452h18v2h-18zM2012,454h20v2h-20zM2032,456h18v2h-18zM2050,458h24v2h-24zM2074,460h26v2h-26zM2100,462h18v2h-18zM2118,464h36v2h-36z" fill="#ffffff"/>
<path d="M1180,880h2v4h-2zM1182,862h2v18h-2zM1184,844h2v18h-2zM1186,826h2v18h-2zM1188,808h2v18h-2zM1190,780h2v28h-2zM1192,772h2v8h-2zM1194,768h2v4h-2zM1196,764h2v4h-2zM1198,762h2v2h-2zM1200,758h2v4h-2zM1202,754h2v4h-2zM1204,750h2v4h-2zM1206,746h2v4h-2zM1208,742h2v4h-2zM1210,738h2v4h-2zM1212,736h2v2h-2zM1214,732h2v4h-2zM1216,730h2v2h-2zM1218,728h2v2h-2zM1220,726h2v2h-2zM1222,724h2v2h-2zM1224,722h2v2h-2zM1226,720h2v2h-2zM1228,718h4v2h-4zM1232,716h2v2h-2zM1234,714h2v2h-2zM1236,712h2v2h-2zM1238,710h2v2h-2zM1240,708h2v2h-2zM1242,706h2v2h-2zM1244,704h2v2h-2zM1246,700h2v4h-2zM1248,698h2v2h-2zM1250,696h2v2h-2zM1252,694h2v2h-2zM1254,692h2v2h-2zM1256,690h30v2h-30zM1286,688h10v2h-10zM1296,686h6v2h-6zM1302,682h2v4h-2zM1304,678h2v4h-2zM1306,676h2v2h-2zM1308,672h2v4h-2zM1310,670h2v2h-2zM1312,666h2v4h-2zM1314,662h2v4h-2zM1316,660h2v2h-2zM1318,658h2v2h-2zM1318,656h4v2h-4zM1322,654h2v2h-2zM1324,652h2v2h-2zM1326,650h4v2h-4zM1330,648h2v2h-2zM1332,646h2v2h-2zM1334,644h4v2h-4zM1338,642h2v2h-2zM1340,640h2v2h-2zM1342,638h6v2h-6zM1348,636h4v2h-4zM1352,634h4v2h-4zM1356,632h4v2h-4zM1360,630h6v2h-6zM1366,628h12v2h-12zM1378,626h8v2h-8zM1386,628h2v2h-2zM1388,630h2v4h-2zM1390,634h2v2h-2zM1392,636h2v2h-2zM1394,638h2v4h-2zM1396,642h2v2h-2zM1398,644h2v2h-2zM1400,646h2v2h-2zM1402,648h2v4h-2zM1404,652h2v2h-2zM1406,654h2v2h-2zM1408,656h4v2h-4zM1412,654h6v2h-6zM1418,652h8v2h-8zM1426,650h2v2h-2zM1428,648h2v2h-2zM1430,644h2v4h-2zM1432,642h2v2h-2zM1434,640h2v2h-2zM1436,638h2v2h-2zM1438,634h2v4h-2zM1440,632h2v2h-2zM1442,630h2v2h-2zM1444,628h2v2h-2zM1446,624h2v4h-2zM1448,622h2v2h-2zM1450,624h2v2h-2zM1452,626h2v4h-2zM1454,630h2v2h-2zM1456,632h2v2h-2zM1458,634h2v2h-2zM1460,636h2v4h-2zM1462,640h2v2h-2zM1464,642h2v2h-2zM1466,644h2v4h-2zM1468,648h2v2h-2zM1470,650h4v2h-4zM1474,648h12v2h-12zM1486,646h8v2h-8zM1492,648h4v2h-4zM1494,650h2v4h-2zM1496,654h2v12h-2zM1498,666h2v10h-2zM1500,676h2v12h-2zM1502,688h2v10h-2zM1504,698h2v10h-2zM1506,708h2v12h-2zM1508,720h2v10h-2zM1510,730h2v12h-2zM1512,742h2v8h-2zM1514,750h2v12h-2zM1516,762h2v10h-2zM1518,772h2v10h-2zM1520,782h2v12h-2zM1522,794h2v12h-2zM1524,806h2v12h-2zM1526,818h2v12h-2zM1528,830h2v12h-2zM1530,842h2v12h-2zM1532,854h2v12h-2zM1534,866h2v12h-2zM1536,878h2v6h-2zM1612,868h2v16h-2zM1614,852h2v16h-2zM1616,834h2v18h-2zM1618,820h2v14h-2zM1618,818h6v2h-6zM1620,816h2v2h-2zM1624,820h2v2h-2zM1626,822h2v2h-2zM1628,824h4v2h-4zM1632,826h2v2h-2zM1634,828h2v2h-2zM1636,830h4v2h-4zM1640,832h2v2h-2zM1642,830h4v2h-4zM1646,828h2v2h-2zM1648,826h4v2h-4zM1652,824h2v2h-2zM1652,822h4v2h-4zM1656,820h2v2h-2zM1658,818h4v2h-4zM1662,816h6v2h-6zM1668,814h10v2h-10zM1678,812h10v2h-10zM1688,810h2v2h-2zM1690,808h2v2h-2zM1692,806h2v2h-2zM1694,804h2v2h-2zM1696,802h2v2h-2zM1698,800h4v2h-4zM1702,798h2v2h-2zM1704,796h2v2h-2zM1706,798h4v2h-4zM1710,800h2v2h-2zM1712,802h2v2h-2zM1714,804h2v2h-2zM1716,806h4v2h-4zM1720,808h2v2h-2zM1722,810h2v2h-2zM1724,812h26v2h-26zM1750,814h2v4h-2zM1752,818h2v2h-2zM1752,820h4v2h-4zM1754,822h2v2h-2zM1756,824h2v4h-2zM1758,828h2v2h-2zM1760,830h2v4h-2zM1762,834h2v4h-2zM1764,838h2v4h-2zM1766,842h2v4h-2zM1768,846h30v2h-30zM1796,848h8v2h-8zM1804,850h6v2h-6zM1810,852h6v2h-6zM1816,850h2v2h-2zM1818,848h2v2h-2zM1820,846h2v2h-2zM1822,844h4v2h-4zM1826,842h2v2h-2zM1828,840h2v2h-2zM1830,838h2v2h-2zM1832,836h4v2h-4zM1836,834h10v2h-10zM1846,832h32v2h-32zM1878,834h2v2h-2zM1880,836h2v2h-2zM1882,838h2v2h-2zM1884,840h2v2h-2zM1886,842h2v2h-2zM1888,844h2v2h-2zM1890,846h2v2h-2zM1892,848h2v2h-2zM1894,850h2v2h-2zM1896,852h4v2h-4zM1900,850h6v2h-6zM1906,848h6v2h-6zM1912,846h32v2h-32zM1944,848h4v2h-4zM1948,850h4v2h-4zM1952,852h4v2h-4zM1956,854h4v2h-4zM1960,856h6v2h-6zM1966,854h8v2h-8zM1974,852h38v2h-38zM2012,850h4v2h-4zM2016,848h6v2h-6zM2022,846h4v2h-4zM2026,848h2v2h-2zM2028,850h2v2h-2zM2030,852h2v2h-2zM2032,854h4v2h-4zM2036,856h2v2h-2zM2038,858h2v2h-2zM2040,860h4v2h-4zM2044,862h48v2h-48zM2092,860h4v2h-4zM2096,858h4v2h-4zM2100,856h4v2h-4zM2104,854h6v2h-6zM2110,852h24v2h-24zM2134,854h6v2h-6zM2140,856h4v2h-4zM2144,858h4v2h-4zM2148,860h4v2h-4zM2152,862h2v2h-2z" fill="#ffff00"/>
<path d="M1170,976h34v2h-34zM1204,978h88v2h-88zM1292,976h60v2h-60zM1352,974h6v2h-6zM1358,972h6v2h-6zM1364,970h14v2h-14zM1378,968h34v2h-34zM1412,966h14v2h-14zM1426,964h8v2h-8zM1434,962h6v2h-6zM1440,960h6v2h-6zM1446,958h12v2h-12zM1458,956h10v2h-10zM1468,954h14v2h-14zM1482,952h10v2h-10zM1492,950h12v2h-12zM1504,948h12v2h-12zM1516,946h6v2h-6zM1522,944h6v2h-6zM1528,942h8v2h-8zM1536,940h10v2h-10zM1546,938h38v2h-38zM1584,936h10v2h-10zM1594,934h12v2h-12zM1606,932h66v2h-66zM1672,930h4v2h-4zM1676,928h38v2h-38zM1714,930h4v2h-4zM1716,932h82v2h-82zM1798,934h8v2h-8zM1804,936h62v2h-62zM1866,938h38v2h-38zM1904,940h8v2h-8zM1912,942h40v2h-40zM1952,944h10v2h-10zM1962,946h10v2h-10zM1972,948h10v2h-10zM1982,950h10v2h-10zM1992,952h12v2h-12zM2004,954h12v2h-12zM2016,956h38v2h-38zM2054,958h6v2h-6zM2060,960h6v2h-6zM2066,962h6v2h-6zM2072,964h6v2h-6zM2078,966h6v2h-6zM2084,968h8v2h-8zM2092,970h10v2h-10zM2102,972h10v2h-10zM2112,974h10v2h-10zM2122,976h12v2h-12zM2134,978h10v2h-10zM2144,980h10v2h-10z" fill="#ff00ff"/>
<rect x="1320" y="1376" width="2" height="2" fill="#00e0ff"/><rect x="1428" y="1336" width="2" height="2" fill="#00e0ff"/>
<path d="M1170,1560h6v180h-6zM1176,1562h92v178h-92zM1268,1564h10v176h-10zM1278,1566h10v174h-10zM1288,1568h16v172h-16zM1304,1570h16v170h-16zM1320,1568h56v172h-56zM1376,1570h12v170h-12zM1388,1572h12v168h-12zM1400,1574h12v166h-12zM1412,1576h16v164h-16zM1428,1574h26v166h-26zM1454,1576h16v164h-16zM1470,1578h12v162h-12zM1482,1580h14v160h-14zM1496,1582h12v158h-12zM1508,1584h10v156h-10zM1518,1586h50v154h-50zM1568,1588h14v152h-14zM1582,1590h6v150h-6zM1588,1592h12v148h-12zM1600,1594h22v146h-22zM1622,1596h18v144h-18zM1640,1594h26v146h-26zM1666,1596h22v144h-22zM1688,1598h104v142h-104zM1792,1600h18v140h-18zM1810,1602h12v138h-12zM1822,1604h6v136h-6zM1828,1606h46v134h-46zM1874,1608h56v132h-56zM1930,1610h36v130h-36zM1966,1612h24v128h-24zM1990,1614h36v126h-36zM2026,1616h16v124h-16zM2042,1614h32v126h-32zM2074,1616h40v124h-40zM2114,1618h40v122h-40z" fill="#7f3f00"/>
<path d="M1556,1586h12v154h-12zM1568,1588h14v152h-14zM1582,1590h6v150h-6zM1588,1592h10v148h-10z" fill="#ff8000"/>
<path d="M1170,1560h2v180h-2z" fill="#ff8000"/>
<rect x="1170" y="1740" width="984" height="2" fill="#e00000"/>
<path d="M1170,1848h6v26h-6zM1176,1848h22v24h-22zM1198,1848h4v22h-4zM1202,1848h6v20h-6zM1208,1848h14v18h-14zM1222,1848h22v16h-22zM1244,1848h8v18h-8zM1252,1848h8v20h-8zM1260,1848h8v22h-8zM1268,1848h28v24h-28zM1296,1848h18v26h-18zM1314,1848h18v24h-18zM1332,1848h22v22h-22zM1354,1848h20v24h-20zM1374,1848h12v26h-12zM1386,1848h10v28h-10zM1396,1848h12v30h-12zM1408,1848h10v32h-10zM1418,1848h6v34h-6zM1424,1848h36v32h-36zM1460,1848h8v34h-8zM1468,1848h22v32h-22zM1490,1848h8v34h-8zM1498,1848h8v36h-8zM1506,1848h6v38h-6zM1512,1848h4v40h-4zM1516,1848h6v42h-6zM1522,1848h6v44h-6zM1528,1848h66v46h-66zM1594,1848h8v44h-8zM1602,1848h6v42h-6zM1608,1848h8v40h-8zM1616,1848h32v38h-32zM1648,1848h6v36h-6zM1654,1848h6v34h-6zM1660,1848h28v32h-28zM1688,1848h4v34h-4zM1692,1848h4v36h-4zM1696,1848h4v38h-4zM1700,1848h10v40h-10zM1710,1848h12v42h-12zM1722,1848h12v44h-12zM1734,1848h12v46h-12zM1746,1848h78v48h-78zM1824,1848h12v46h-12zM1836,1848h10v44h-10zM1846,1848h10v42h-10zM1856,1848h8v40h-8zM1864,1848h8v38h-8zM1872,1848h14v36h-14zM1886,1848h18v34h-18zM1904,1848h44v32h-44zM1948,1848h44v34h-44zM1992,1848h32v36h-32zM2024,1848h18v34h-18zM2042,1848h18v32h-18zM2060,1848h14v30h-14zM2074,1848h18v32h-18zM2092,1848h20v34h-20zM2112,1848h42v32h-42z" fill="#ff0000"/>
<rect x="1030" y="2042" width="1124" height="32" fill="#000"/>
<rect x="1062" y="2044" width="1092" height="28" fill="url(#dots)"/>
<rect x="1032" y="2044" width="28" height="28" fill="#c2c2c2"/>
<rect x="1058" y="2044" width="2" height="28" fill="#9a9a9a"/><rect x="1032" y="2070" width="28" height="2" fill="#9a9a9a"/><rect x="1034" y="2046" width="22" height="2" fill="#d8d8d8"/>
<path d="M1038,2056 L1042,2056 L1042,2054 L1046,2054 L1046,2052 L1050,2052 L1050,2050 L1052,2050 L1052,2064 L1050,2064 L1050,2062 L1046,2062 L1046,2060 L1042,2060 L1042,2058 L1038,2058 Z" fill="#111"/>
<rect x="1170.0" y="2082" width="2" height="10" fill="#000"/>
<rect x="1236.0" y="2082" width="2" height="10" fill="#000"/>
<rect x="1448.2" y="2082" width="2" height="10" fill="#000"/>
<rect x="1662.2" y="2082" width="2" height="10" fill="#000"/>
<rect x="1876.0" y="2082" width="2" height="10" fill="#000"/>
<rect x="2088.0" y="2082" width="2" height="10" fill="#000"/>
</svg>
<div class="yt" style="top:30.0px">800</div>
<div class="yt" style="top:96.8px">600</div>
<div class="yt" style="top:163.5px">400</div>
<div class="yt" style="top:230.2px">200</div>
<div class="yt" style="top:297.0px">0</div>
<div class="yl" style="left:941px;top:162.0px;letter-spacing:0px">Power (W)</div>
<div class="yt" style="top:317.0px">40</div>
<div class="yt" style="top:383.5px">30</div>
<div class="yt" style="top:450.0px">20</div>
<div class="yt" style="top:516.5px">10</div>
<div class="yt" style="top:583.0px">0</div>
<div class="yl" style="left:955px;top:449.0px;letter-spacing:0.6px">Speed (mph)</div>
<div class="yt" style="top:603.0px">110</div>
<div class="yt" style="top:636.2px">100</div>
<div class="yt" style="top:702.8px">80</div>
<div class="yt" style="top:769.2px">60</div>
<div class="yt" style="top:835.8px">40</div>
<div class="yt" style="top:869.0px">30</div>
<div class="yl" style="left:940px;top:735.0px;letter-spacing:0.9px">Cad (rpm)</div>
<div class="yt" style="top:889.0px">180</div>
<div class="yt" style="top:955.5px">160</div>
<div class="yt" style="top:1022.0px">140</div>
<div class="yt" style="top:1088.5px">120</div>
<div class="yt" style="top:1155.0px">100</div>
<div class="yl" style="left:940px;top:1021.0px;letter-spacing:0.5px">HR (bpm)</div>
<div class="yt" style="top:1175.0px">6</div>
<div class="yt" style="top:1228.2px">5</div>
<div class="yt" style="top:1281.4px">4</div>
<div class="yt" style="top:1334.6px">3</div>
<div class="yt" style="top:1387.8px">2</div>
<div class="yt" style="top:1441.0px">1</div>
<div class="yl" style="left:968px;top:1307.0px;letter-spacing:0px">Gear Ratio</div>
<div class="yt" style="top:1461.0px">700</div>
<div class="yt" style="top:1505.3px">650</div>
<div class="yt" style="top:1549.7px">600</div>
<div class="yt" style="top:1594.0px">550</div>
<div class="yt" style="top:1638.3px">500</div>
<div class="yt" style="top:1682.7px">450</div>
<div class="yt" style="top:1727.0px">400</div>
<div class="yl" style="left:940px;top:1593.0px;letter-spacing:0.5px">Elev (ft)</div>
<div class="yt" style="top:1747.0px">10</div>
<div class="yt" style="top:1791.3px">5</div>
<div class="yt" style="top:1835.7px">0</div>
<div class="yt" style="top:1880.0px">−5</div>
<div class="yt" style="top:1924.3px">−10</div>
<div class="yt" style="top:1968.7px">−15</div>
<div class="yt" style="top:2013.0px">−20</div>
<div class="yl" style="left:941px;top:1879.0px;letter-spacing:-0.3px">Slope (%)</div>
<div class="xt" style="left:1072.0px">00:07:06</div>
<div class="xt" style="left:1349.5px">00:07:20</div>
<div class="xt" style="left:1563.2px">00:07:30</div>
<div class="xt" style="left:1777.0px">00:07:40</div>
<div class="xt" style="left:1989.5px">00:07:50</div>
<div class="abs" style="left:1175px;top:326px;font-size:21.5px;font-weight:bold;line-height:34px;color:#fff;letter-spacing:-0.2px">Wheel <span style="color:#0a80c4">Wind</span></div>
<div class="abs" style="left:1176px;top:1470px;font-size:21.5px;font-weight:bold;line-height:34px;color:#ff9020;letter-spacing:0.1px">Coasting <span style="color:#e00020">Braking</span></div>
</body></html>
